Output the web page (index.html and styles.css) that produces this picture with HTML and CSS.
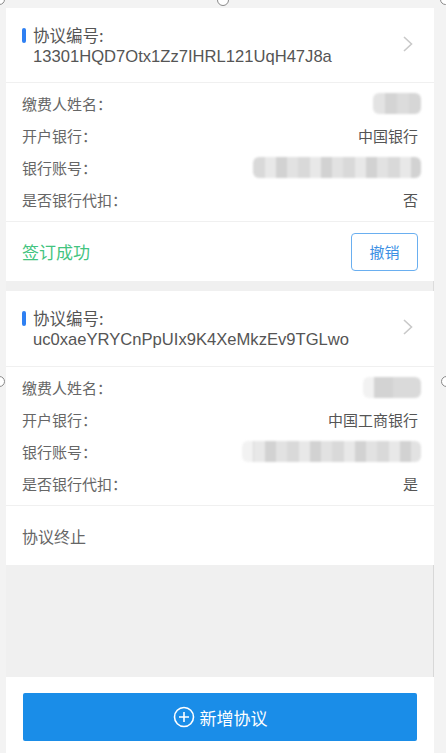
FILE: index.html
```html
<!DOCTYPE html>
<html lang="zh">
<head>
<meta charset="utf-8">
<link rel="stylesheet" href="styles.css">
</head>
<body>
<div class="page">
  <div class="card">
    <div class="card-head">
      <div class="head-text">
        <div class="head-line"><span class="mark"></span>协议编号:</div>
        <div class="head-line code">13301HQD7Otx1Zz7IHRL121UqH47J8a</div>
      </div>
      <svg class="chev" width="12" height="18" viewBox="0 0 12 18"><path d="M2 2 L9.5 9 L2 16" fill="none" stroke="#c9c9c9" stroke-width="1.6"/></svg>
    </div>
    <div class="rows">
      <div class="row"><span class="label">缴费人姓名：</span><span class="blur blur-name"></span></div>
      <div class="row"><span class="label">开户银行：</span><span class="value">中国银行</span></div>
      <div class="row"><span class="label">银行账号：</span><span class="blur blur-acct"></span></div>
      <div class="row"><span class="label">是否银行代扣：</span><span class="value">否</span></div>
    </div>
    <div class="card-foot">
      <span class="status ok">签订成功</span>
      <button class="btn-cancel">撤销</button>
    </div>
  </div>
  <div class="gap"></div>
  <div class="card">
    <div class="card-head head2">
      <div class="head-text">
        <div class="head-line"><span class="mark"></span>协议编号:</div>
        <div class="head-line code">uc0xaeYRYCnPpUIx9K4XeMkzEv9TGLwo</div>
      </div>
      <svg class="chev" width="12" height="18" viewBox="0 0 12 18"><path d="M2 2 L9.5 9 L2 16" fill="none" stroke="#c9c9c9" stroke-width="1.6"/></svg>
    </div>
    <div class="rows">
      <div class="row"><span class="label">缴费人姓名：</span><span class="blur blur-name wide"></span></div>
      <div class="row"><span class="label">开户银行：</span><span class="value">中国工商银行</span></div>
      <div class="row"><span class="label">银行账号：</span><span class="blur blur-acct wide"></span></div>
      <div class="row"><span class="label">是否银行代扣：</span><span class="value">是</span></div>
    </div>
    <div class="card-foot">
      <span class="status ended">协议终止</span>
    </div>
  </div>
  <div class="filler"></div>
  <div class="bottom">
    <button class="btn-add">
      <svg width="22" height="22" viewBox="0 0 22 22"><circle cx="11" cy="11" r="9.5" fill="none" stroke="#fff" stroke-width="1.6"/><path d="M11 6 V16 M6 11 H16" stroke="#fff" stroke-width="1.6"/></svg>
      <span>新增协议</span>
    </button>
  </div>
</div>
<span class="handle h-tl"></span>
<span class="handle h-tc"></span>
<span class="handle h-tr"></span>
<span class="handle h-ml"></span>
<span class="handle h-mr"></span>
</body>
</html>
```
FILE: styles.css
```css
html, body {
  margin: 0;
  padding: 0;
}
body {
  background: #f3f3f3;
  width: 446px;
  height: 753px;
  overflow: hidden;
  position: relative;
  font-family: "Noto Sans CJK SC", "Liberation Sans", sans-serif;
}
.page {
  width: 428px;
  margin-left: 6px;
  padding-top: 8px;
  height: 745px;
  display: flex;
  flex-direction: column;
}
.card {
  background: #fff;
}
.card-head {
  display: flex;
  align-items: center;
  justify-content: space-between;
  padding: 17px 20px 15px 16px;
  border-bottom: 1px solid #f0f0f0;
}
.head2 {
  padding-top: 17px;
  padding-bottom: 16px;
}
.head-line {
  font-size: 16.5px;
  line-height: 21px;
  color: #555;
  display: flex;
  align-items: center;
  padding-left: 11px;
  position: relative;
}
.code {
  font-family: "Liberation Sans", Arial, sans-serif;
  font-size: 16.6px;
}
.mark {
  position: absolute;
  left: 0;
  top: 3px;
  width: 4px;
  height: 15px;
  border-radius: 2px;
  background: #2f80f2;
}
.chev {
  margin-top: -4px;
}
.rows {
  padding: 4px 16px 6px 16px;
  border-bottom: 1px solid #f0f0f0;
}
.row {
  height: 32px;
  display: flex;
  align-items: center;
  justify-content: space-between;
  font-size: 15px;
}
.label {
  color: #666;
}
.value {
  color: #555;
}
.blur {
  display: block;
  height: 21px;
  margin-right: -3px;
  border-radius: 6px;
  filter: blur(0.8px);
  background:
    repeating-linear-gradient(90deg, #d9d9d9 0 12px, #e8e8e8 12px 23px, #d2d2d2 23px 34px, #e2e2e2 34px 45px);
}
.blur-name {
  width: 48px;
  background: linear-gradient(90deg, #e3e3e3 0 12px, #d4d4d4 12px 24px, #dcdcdc 24px 36px, #d6d6d6 36px);
}
.blur-name.wide {
  width: 58px;
  background: linear-gradient(90deg, #f2f2f2 0 11px, #d3d3d3 11px 30px, #dadada 30px);
}
.blur-acct {
  width: 168px;
}
.blur-acct.wide {
  width: 179px;
  background:
    linear-gradient(90deg, #f2f2f2 0 11px, transparent 11px),
    repeating-linear-gradient(90deg, #d9d9d9 0 12px, #e8e8e8 12px 23px, #d2d2d2 23px 34px, #e2e2e2 34px 45px);
}
.card-foot {
  height: 59px;
  display: flex;
  align-items: center;
  justify-content: space-between;
  padding: 0 16px;
}
.status {
  font-size: 17px;
}
.ok {
  color: #43c47f;
}
.ended {
  color: #666;
  font-size: 16px;
}
.btn-cancel {
  width: 67px;
  height: 38px;
  border: 1.5px solid #6aaff0;
  border-radius: 4px;
  background: #fff;
  color: #3b90e4;
  font-family: "Noto Sans CJK SC", sans-serif;
  font-size: 15px;
  padding: 0;
}
.gap {
  height: 10px;
  background: #f0f0f0;
  box-shadow: inset -1px 0 0 #dcdcdc;
}
.filler {
  flex: 1;
  background: #f0f0f0;
  box-shadow: inset -1px 0 0 #d8d8d8;
}
.bottom {
  background: #fff;
  height: 76px;
  padding: 16px 17px 0 17px;
  box-sizing: border-box;
}
.btn-add {
  width: 100%;
  height: 48px;
  border: none;
  border-radius: 2px;
  background: #1a8de8;
  color: #fff;
  font-family: "Noto Sans CJK SC", sans-serif;
  font-size: 17px;
  display: flex;
  align-items: center;
  justify-content: center;
  gap: 5px;
  padding: 0;
}
.handle {
  position: absolute;
  width: 11px;
  height: 11px;
  border-radius: 50%;
  border: 1px solid #8a8a8a;
  background: #fff;
  box-sizing: border-box;
}
.h-tl { left: -6px; top: -6px; }
.h-tc { left: 217px; top: -6px; width: 12px; height: 12px; }
.h-tr { left: 440px; top: -6px; }
.h-ml { left: -6px; top: 376px; }
.h-mr { left: 441px; top: 376px; }
```
